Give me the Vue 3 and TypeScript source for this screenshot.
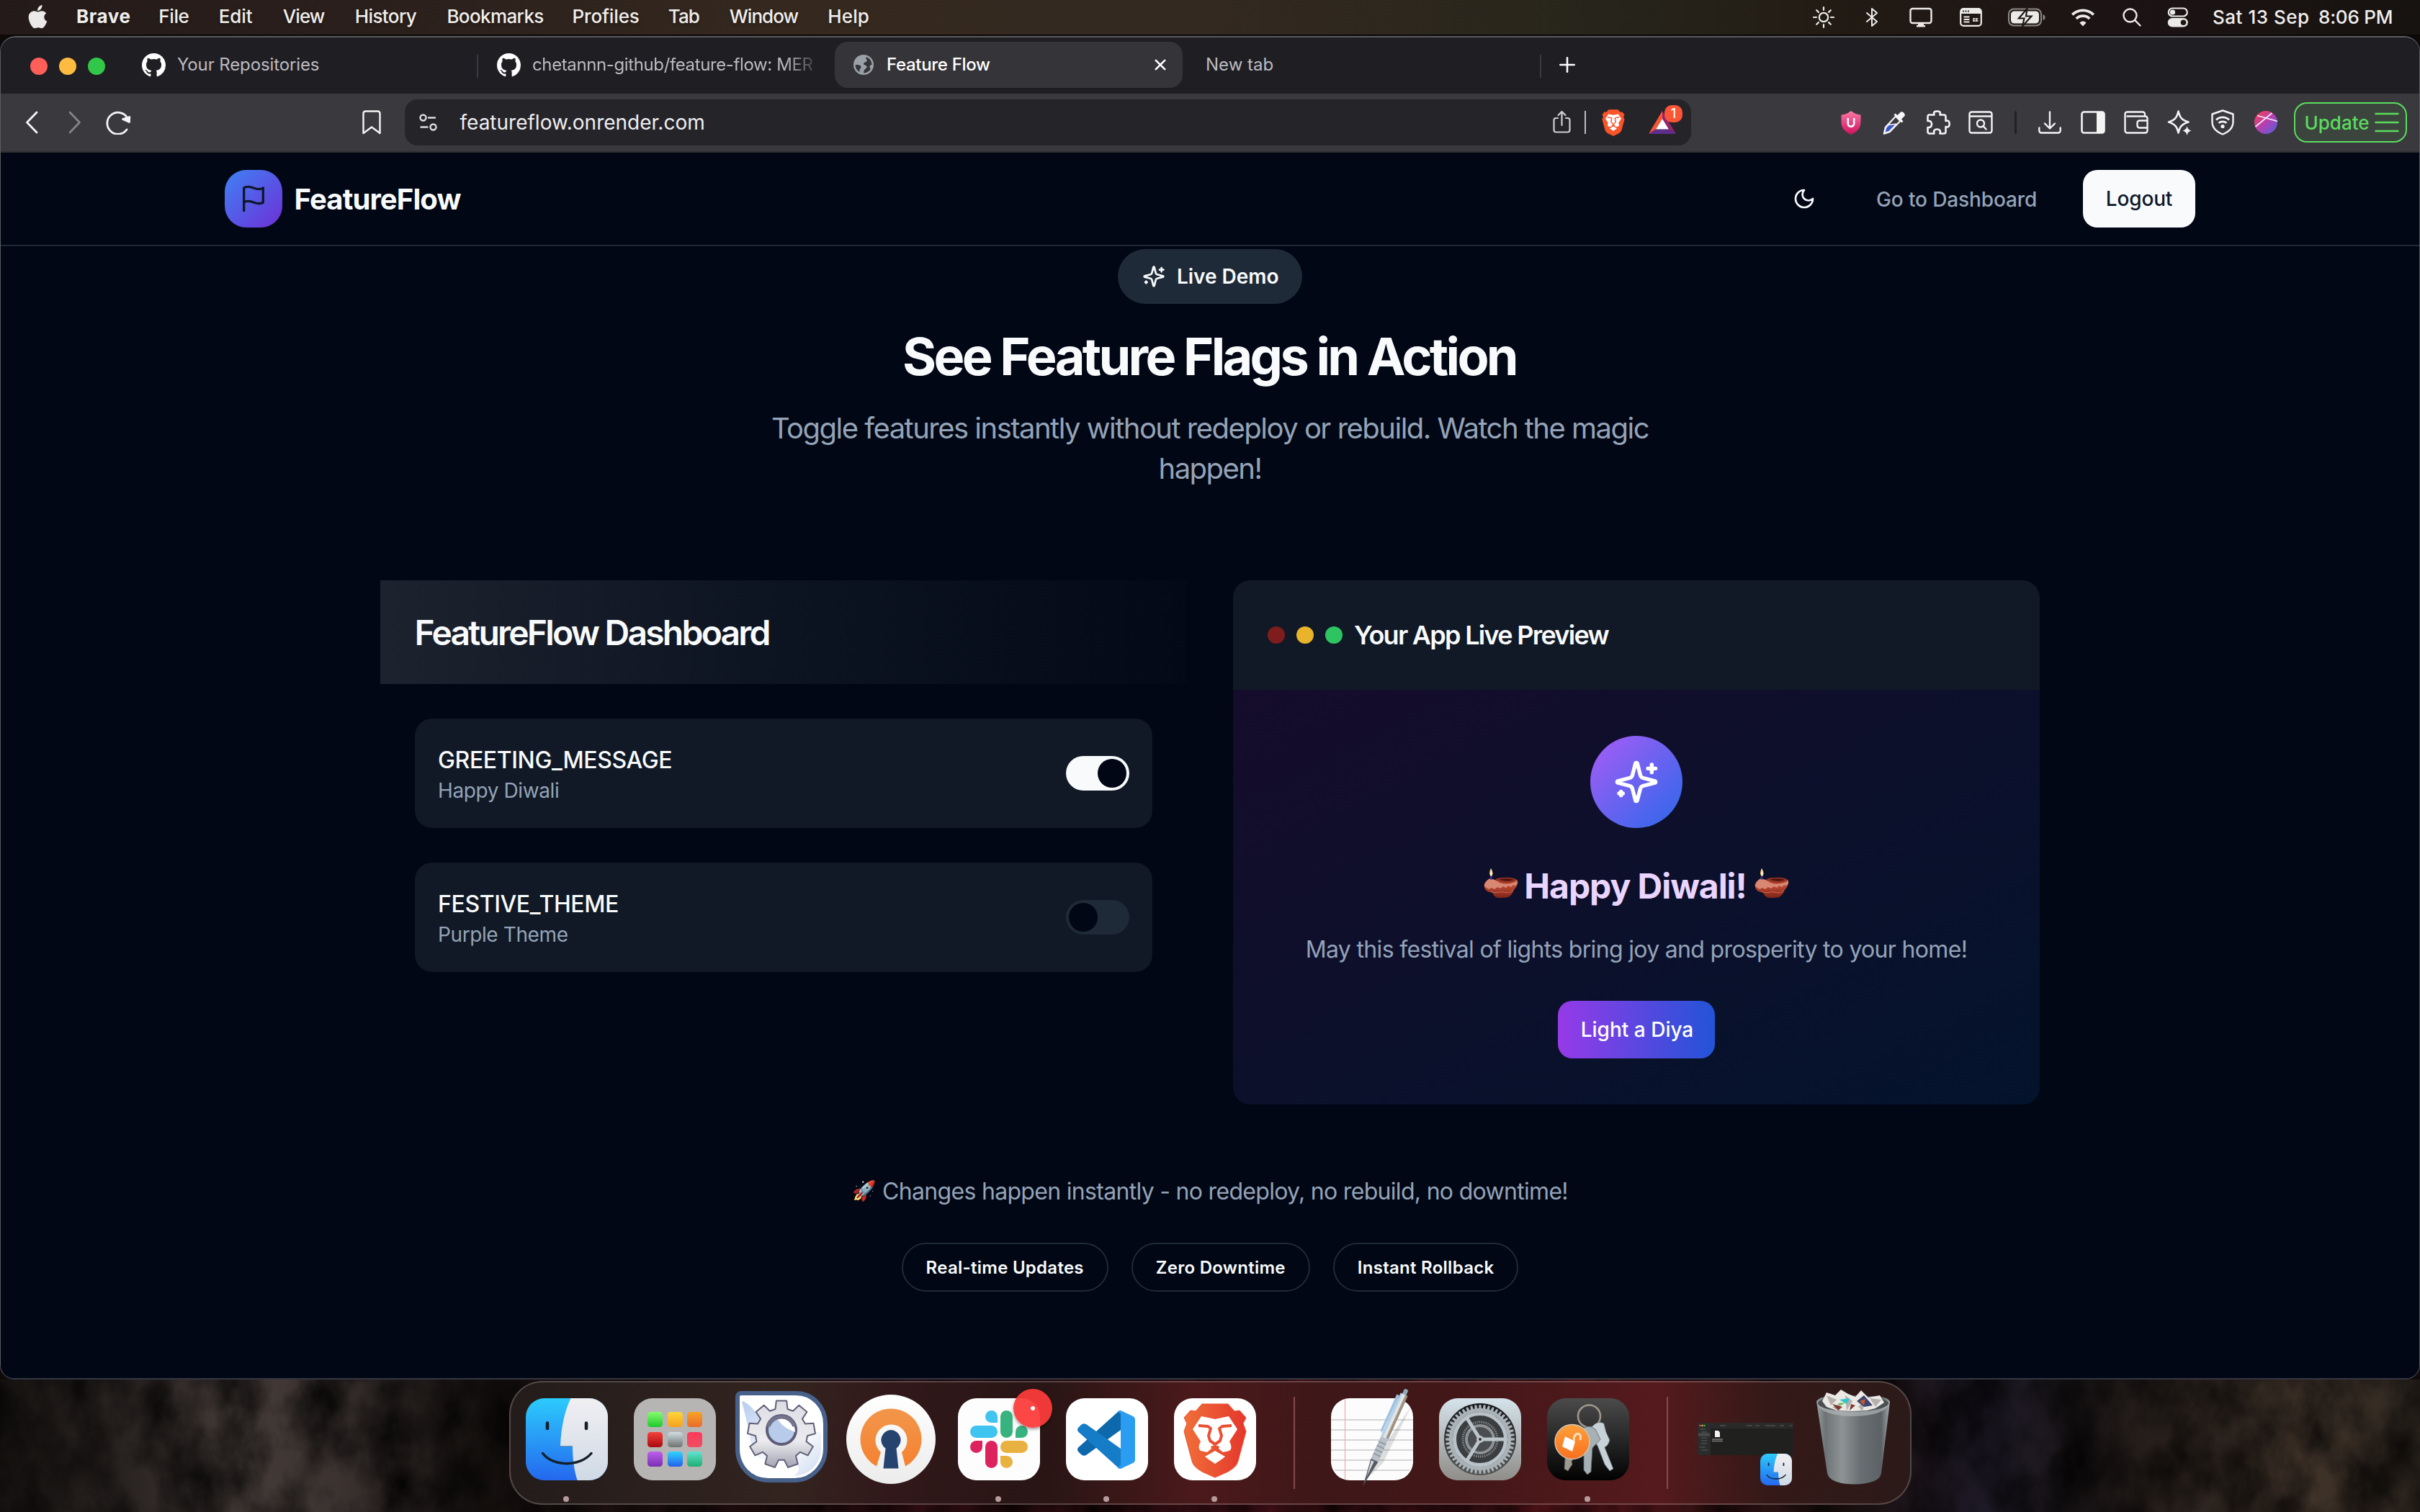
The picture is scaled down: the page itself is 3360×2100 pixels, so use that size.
<script setup lang="ts">
interface MenuItem { label: string; width: number; spacing: number; bold?: boolean }

const menu: MenuItem[] = [
  { label: 'Brave', width: 114.2, spacing: 0.57, bold: true },
  { label: 'File', width: 83.6, spacing: -0.34 },
  { label: 'Edit', width: 89, spacing: -0.1 },
  { label: 'View', width: 100, spacing: -0.94 },
  { label: 'History', width: 127.6, spacing: -0.61 },
  { label: 'Bookmarks', width: 174, spacing: -0.61 },
  { label: 'Profiles', width: 133.4, spacing: -0.11 },
  { label: 'Tab', width: 85, spacing: -0.92 },
  { label: 'Window', width: 136.6, spacing: -0.98 },
  { label: 'Help', width: 60, spacing: 0.11 },
]

const flags = [
  { key: 'GREETING_MESSAGE', note: 'Happy Diwali', on: true },
  { key: 'FESTIVE_THEME', note: 'Purple Theme', on: false },
]

const pills = ['Real-time Updates', 'Zero Downtime', 'Instant Rollback']

const launchTiles = [
  ['#86fb72', '#1fc92b'], ['#fdd63c', '#f7a01d'], ['#f7a326', '#ea6a2c'],
  ['#f5413b', '#a90a10'], ['#cfdde2', '#6f7271'], ['#fb3a5c', '#ef4e62'],
  ['#bb60ea', '#7a2fb4'], ['#2fd5fd', '#2360ea'], ['#62e2cf', '#1fae72'],
]

/* Outline of a cog with the given number of teeth around (cx, cy). */
function cog(cx: number, cy: number, teeth: number, outer: number, inner: number): string {
  const pts: string[] = []
  const step = (Math.PI * 2) / teeth
  for (let i = 0; i < teeth; i++) {
    const a = i * step - Math.PI / 2
    const ring: [number, number][] = [[-0.34, inner], [-0.22, outer], [0.22, outer], [0.34, inner]]
    for (const [k, r] of ring) {
      pts.push(`${(cx + Math.cos(a + k * step) * r).toFixed(2)} ${(cy + Math.sin(a + k * step) * r).toFixed(2)}`)
    }
  }
  return `M${pts.join('L')}Z`
}
const prefsCog = cog(64, 60, 9, 47, 36)
const settingsCog = cog(57, 57, 48, 48, 43)
</script>

<template>
  <div class="desktop">
    <svg class="defs" width="0" height="0" aria-hidden="true">
      <defs>
        <linearGradient id="finderBlue" x1="0" y1="0" x2="0" y2="1"><stop offset="0" stop-color="#2ccbfd" /><stop offset="1" stop-color="#2468ee" /></linearGradient>
        <linearGradient id="finderFace" x1="0" y1="0" x2="0" y2="1"><stop offset="0" stop-color="#f0eff2" /><stop offset="1" stop-color="#cfdae6" /></linearGradient>
        <linearGradient id="braveFill" x1="0" y1="0" x2="1" y2="0"><stop offset="0" stop-color="#f06f38" /><stop offset="1" stop-color="#e5372c" /></linearGradient>
        <clipPath id="tileClip"><rect width="114" height="114" rx="26" /></clipPath>
        <symbol id="finder" viewBox="0 0 114 114">
          <g clip-path="url(#tileClip)">
            <rect width="114" height="114" fill="url(#finderBlue)" />
            <path d="M62.500 0C54 18 49 40 48 66.500H65C65 84 67 100 71.500 114H114V0Z" fill="url(#finderFace)" />
            <path d="M48 66.500H65" stroke="#8090a0" stroke-width="1.200" />
          </g>
          <g fill="none" stroke="#14202c" stroke-linecap="round">
            <path d="M30 34.500V42M84 34.500V42" stroke-width="4.600" />
            <path d="M23.500 76.500C38 95.500 75 95.500 91 76.500" stroke-width="3.400" />
          </g>
        </symbol>
        <symbol id="sparkles" viewBox="0 0 24 24">
          <path d="M9.937 15.500A2 2 0 0 0 8.500 14.063l-6.135-1.582a.5.5 0 0 1 0-.962L8.500 9.936A2 2 0 0 0 9.937 8.500l1.582-6.135a.5.5 0 0 1 .963 0L14.063 8.500A2 2 0 0 0 15.500 9.937l6.135 1.581a.5.5 0 0 1 0 .964L15.500 14.063a2 2 0 0 0-1.437 1.437l-1.582 6.135a.5.5 0 0 1-.963 0z" />
          <path d="M20 3v4M22 5h-4M4 17v2M5 18H3" />
        </symbol>
        <symbol id="github" viewBox="0 0 16 16">
          <path fill="#fff" d="M8 0C3.580 0 0 3.580 0 8c0 3.540 2.290 6.530 5.470 7.590.4.070.55-.17.55-.38 0-.19-.01-.82-.01-1.490-2.010.37-2.530-.49-2.690-.94-.09-.23-.48-.94-.82-1.130-.28-.15-.68-.52-.01-.53.63-.01 1.080.58 1.230.82.72 1.210 1.870.87 2.330.66.070-.52.28-.87.51-1.070-1.780-.2-3.640-.89-3.640-3.950 0-.87.31-1.590.82-2.150-.08-.2-.36-1.020.08-2.120 0 0 .67-.21 2.200.82.64-.18 1.320-.27 2-.27s1.360.09 2 .27c1.530-1.040 2.200-.82 2.200-.82.44 1.100.16 1.920.08 2.120.51.56.82 1.270.82 2.150 0 3.070-1.870 3.750-3.650 3.950.29.25.54.73.54 1.480 0 1.070-.01 1.930-.01 2.200 0 .21.15.46.55.38A8.010 8.010 0 0 0 16 8c0-4.420-3.580-8-8-8" />
        </symbol>
        <symbol id="lion" viewBox="0 0 88 104">
          <path class="lion-mane" d="M26 1H62L71 11L78 10L87 20L83 28L87 39L76 80C74 88 68 91 62 95L44 103L26 95C20 91 14 88 12 80L1 39L5 28L1 20L10 10L17 11Z" />
          <path fill="#fff" stroke="none" d="M25 18L44 22L63 18L75 36L64 53Q69 62 64 66L55 68L49 63L50 60L44 58L38 60L39 63L33 68L24 66Q19 62 24 53L13 36Z" />
          <path fill="#fff" stroke="none" d="M44 66L58 74L53 78L44 84L35 78L30 74Z" />
          <path d="M21 31L34 32L38 35L35 45L37 52L44 57L51 52L53 45L50 35L54 32L67 31" fill="none" stroke-width="4" stroke-linejoin="round" />
        </symbol>
        <linearGradient id="clay" x1="0" y1="0" x2="0" y2="1"><stop offset="0" stop-color="#d8755c" /><stop offset=".45" stop-color="#b44630" /><stop offset="1" stop-color="#7c2318" /></linearGradient>
        <symbol id="diya" viewBox="0 0 48 42">
          <path d="M1 26C-1 21 4 17 9 14L22 18L46 16C49 19 46 26 42 30C38 41 32 41 25 41C17 42 15 39 12 34C6 33 2 31 1 26Z" fill="url(#clay)" />
          <path d="M1 25C2 19 5 16 9 14C13 15 17 17 21 20C28 23 39 22 47 18C47 21 46 23 44 24L41 23L38 26L34 24L31 27L27 25L23 28L19 26L15 29L11 27L7 29L4 27Z" fill="#d88772" />
          <path d="M16 15C24 12 42 12 46 16C43 21 28 22 22 19Z" fill="#9c3521" />
          <path d="M21 15.500C28 13.500 38 14 42 16C36 18.500 27 18 21 15.500Z" fill="#4a1510" />
          <path d="M10 32Q14 35 19 33.500Q26 31.500 32 34Q37 35 41 30" fill="none" stroke="#c8654d" stroke-width="1" />
          <path d="M8.500 15L9 9L11.500 9.500L11.500 16Z" fill="#35317e" />
          <path d="M10 0C13 5 13.500 9 10.500 11C7.500 10 7.500 5 10 0Z" fill="#ffd98a" />
          <path d="M10.200 4C11.500 7 11.500 9 10.300 10C9 9 9 7 10.200 4Z" fill="#fffbe8" />
        </symbol>
      </defs>
    </svg>

    <header class="menubar">
      <svg class="apple" width="27" height="33" viewBox="0 0 27 33" fill="#eceae8">
        <path d="M19.500 0C19.700 2.300 18.800 4.300 17.500 5.800C16.200 7.300 14.600 8 13 7.900C12.800 5.800 13.800 3.800 15 2.400C16.200 1 17.900 .2 19.500 0ZM25.300 11.600C23.200 12.900 22.300 14.600 22.300 16.800C22.300 19.600 23.900 21.700 26.300 22.600C25.600 24.900 24.600 27 23.200 29C21.900 30.900 20.800 32.300 18.900 32.300C17.100 32.300 16.400 31.300 14.200 31.300C12 31.300 11.200 32.300 9.500 32.300C7.600 32.400 6.400 31 5 29C.8 23 -1 14.500 2.700 10.900C4.400 9.100 6.400 8.200 8.400 8.200C10.500 8.200 12 9.400 13.800 9.400C15.500 9.400 16.800 8.200 19.200 8.200C21.500 8.200 23.800 9.400 25.300 11.600Z" />
      </svg>
      <nav class="menu">
        <span v-for="m in menu" :key="m.label" :class="{ bold: m.bold }" :style="{ width: m.width + 'px', letterSpacing: m.spacing + 'px' }">{{ m.label }}</span>
      </nav>
      <div class="status">
        <svg width="32" height="32" viewBox="0 0 32 32" fill="none" stroke="#eceae8" stroke-width="2.200" stroke-linecap="round"><circle cx="16" cy="16" r="6.200" /><path d="M16 2v4M16 26v4M2 16h4M26 16h4M6.200 6.200l2.700 2.700M23.100 23.100l2.700 2.700M6.200 25.800l2.700-2.700M23.100 8.900l2.700-2.700" /></svg>
        <svg width="18" height="28" viewBox="0 0 18 28" fill="none" stroke="#eceae8" stroke-width="2" stroke-linejoin="round" stroke-linecap="round"><path d="M2 8l14 12-7 6V2l7 6L2 20" /></svg>
        <svg width="32" height="28" viewBox="0 0 32 28"><rect x="1.500" y="2" width="29" height="20" rx="3" fill="none" stroke="#eceae8" stroke-width="2.400" /><path d="M12 22h8v3h2v2.500H10V25h2z" fill="#eceae8" /></svg>
        <svg width="31" height="26" viewBox="0 0 31 26"><rect x="1.200" y="1.200" width="28.600" height="23.600" rx="4" fill="none" stroke="#eceae8" stroke-width="2.200" /><path d="M1.500 2h28v6h-28z" fill="#eceae8" /><g fill="#1d1714"><circle cx="5" cy="4.600" r="1.100" /><circle cx="8.500" cy="4.600" r="1.100" /><circle cx="12" cy="4.600" r="1.100" /></g><path d="M5.500 12.500h8M5.500 16h8M5.500 19.500h8" stroke="#eceae8" stroke-width="1.800" /><path d="M19.500 14v5M23.500 14v5M18 15.200h7.500M18 18h7.500" stroke="#eceae8" stroke-width="1.300" /></svg>
        <svg width="52" height="26" viewBox="0 0 52 26"><rect x="1" y="1.500" width="45" height="23" rx="7" fill="none" stroke="#8d8985" stroke-width="2" /><rect x="4" y="4.500" width="39" height="17" rx="4.500" fill="#eceae8" /><path d="M48.500 9q3 1 3 4t-3 4z" fill="#8d8985" /><path d="M26.500 1L15 14.500h7.500L20 25.500L32.500 11.500H25Z" fill="#eceae8" stroke="#1d1714" stroke-width="2.200" /></svg>
        <svg width="34" height="26" viewBox="0 0 34 26" fill="none" stroke="#eceae8" stroke-width="3.800"><path d="M2.200 9.400a21 21 0 0 1 29.600 0" /><path d="M7.800 15a13 13 0 0 1 18.400 0" /><path d="M17 25.500l-4.600-5a6.500 6.500 0 0 1 9.200 0z" fill="#eceae8" stroke="none" /></svg>
        <svg width="26" height="26" viewBox="0 0 26 26" fill="none" stroke="#eceae8" stroke-width="2.400" stroke-linecap="round"><circle cx="10.500" cy="10.500" r="9" /><path d="M17.200 17.200l7.300 7.300" /></svg>
        <svg width="30" height="28" viewBox="0 0 30 28"><rect x="1.800" y="1.500" width="26" height="11" rx="5.500" fill="none" stroke="#eceae8" stroke-width="2.200" /><circle cx="7.500" cy="7" r="3.600" fill="#eceae8" /><rect x=".8" y="15" width="28" height="12.500" rx="6.200" fill="#eceae8" /><circle cx="22.500" cy="21.200" r="3.800" fill="#1d1714" /></svg>
        <div class="clock"><span class="date">Sat 13 Sep</span><span class="time">8:06 PM</span></div>
      </div>
    </header>

    <main class="window">
      <div class="tabstrip">
        <div class="lights"><i class="close" /><i class="mini" /><i class="zoom" /></div>
        <div class="tab first"><svg width="33" height="33"><use href="#github" /></svg><span>Your Repositories</span></div>
        <i class="tabsep" />
        <div class="tab second"><svg width="33" height="33"><use href="#github" /></svg><span class="fade">chetannn-github/feature-flow: MER</span></div>
        <div class="tab active">
          <svg width="28" height="28" viewBox="0 0 28 28"><circle cx="14" cy="14" r="14" fill="#9aa0a8" /><path d="M18 3.300C16 6 19.500 6.500 18.500 9C17.500 11 14.500 10 14 12.500C13.500 14.500 18 14 18.500 16.500C19 19 15.500 19.500 14.500 22C14 23.500 14.500 25 14 25.500C18.500 25.500 22 23 24 19.500C21.500 18 22 14.500 25.500 14C25.500 9 22.500 5 18 3.300Z" fill="#353439" /><path d="M2.600 14C7 13.500 11 14.500 10.500 17.500C10 19.500 8 19.500 8.500 22C9 23.500 8.500 24 8.500 24A11.500 11.500 0 0 1 2.600 14Z" fill="#353439" /></svg>
          <span>Feature Flow</span>
          <svg class="x" width="16" height="16" viewBox="0 0 16 16" stroke="#fff" stroke-width="2.600" stroke-linecap="round"><path d="M1.800 1.800l12.400 12.400M14.200 1.800L1.800 14.200" /></svg>
        </div>
        <div class="tab last"><span>New tab</span></div>
        <i class="tabsep" />
        <svg class="plus" width="22" height="22" viewBox="0 0 22 22" stroke="#fff" stroke-width="2.600" stroke-linecap="round"><path d="M11 1.300v19.400M1.300 11h19.400" /></svg>
      </div>

      <div class="toolbar">
        <div class="history">
          <svg width="18" height="32" viewBox="0 0 18 32" fill="none" stroke="#f4f4f5" stroke-width="2.800" stroke-linecap="round" stroke-linejoin="round"><path d="M16 2L2.500 16L16 30" /></svg>
          <svg width="18" height="32" viewBox="0 0 18 32" fill="none" stroke="#86858a" stroke-width="2.600" stroke-linecap="round" stroke-linejoin="round"><path d="M2 2L15.500 16L2 30" /></svg>
          <svg width="36" height="34" viewBox="0 0 36 34" fill="none" stroke="#f4f4f5" stroke-width="2.800" stroke-linecap="round"><path d="M30 27A15 15 0 1 1 31 11" /><path d="M24.500 12.500L33.800 9.500L33.500 16.500Z" fill="#f4f4f5" stroke-linejoin="round" /></svg>
        </div>
        <svg class="bookmark" width="26" height="34" viewBox="0 0 26 34" fill="none" stroke="#f4f4f5" stroke-width="2.400" stroke-linejoin="round"><path d="M1.500 4.500a3 3 0 0 1 3-3h17a3 3 0 0 1 3 3V32L13 23.500L1.500 32Z" /></svg>
        <div class="address">
          <svg class="tune" width="25" height="24" viewBox="0 0 25 24" fill="none" stroke="#dcdce0" stroke-width="2.400" stroke-linecap="round"><circle cx="5.500" cy="5.500" r="4" /><path d="M13 5.500h9M2.500 18.500h9" /><circle cx="19.500" cy="18.500" r="4" /></svg>
          <span class="url">featureflow.onrender.com</span>
          <svg class="share" width="25" height="32" viewBox="0 0 25 32" fill="none" stroke="#cfced4" stroke-width="2.200" stroke-linecap="round" stroke-linejoin="round"><path d="M12.500 21V2M7.500 7l5-5 5 5M7 11H4.500a3 3 0 0 0-3 3v13.500a3 3 0 0 0 3 3h16a3 3 0 0 0 3-3V14a3 3 0 0 0-3-3H18" /></svg>
          <i class="urlsep" />
          <svg class="lion" width="32" height="37"><use href="#lion" /></svg>
          <div class="bat">
            <svg width="38" height="32" viewBox="0 0 38 32"><path d="M19 0L0 32L10 25.500L19 11Z" fill="#fb5534" /><path d="M19 0L38 32L28 25.500L19 11Z" fill="#96226b" /><path d="M0 32H38L28 25.500H10Z" fill="#5f2e8c" /><path d="M19 11L10 25.500H28Z" fill="#fff" /></svg>
            <b>1</b>
          </div>
        </div>
        <div class="tools">
          <svg width="28" height="33" viewBox="0 0 28 33"><defs><linearGradient id="ub" x1="0" y1="0" x2="0" y2="1"><stop offset="0" stop-color="#fb7aa4" /><stop offset="1" stop-color="#cf1160" /></linearGradient></defs><path d="M14 0C18 3.500 23 5 27.500 5.500V16C27.500 24 22 29.500 14 33C6 29.500 .5 24 .5 16V5.500C5 5 10 3.500 14 0Z" fill="url(#ub)" /><path d="M9.800 10v7.500a4.200 4.200 0 0 0 8.400 0V10" fill="none" stroke="#fff" stroke-width="2.600" /></svg>
          <svg width="32" height="33" viewBox="0 0 32 33"><path d="M4 23L18 8L24 14L9.500 29L2 31.500Z" fill="#3457c5" stroke="#f1f1f3" stroke-width="2.600" stroke-linejoin="round" /><path d="M7.500 19.500L18 8L24 14L20 18Z" fill="#3a393e" stroke="#f1f1f3" stroke-width="1.600" /><path d="M15.500 5.500L26.500 16.500L28.500 14.500L26 11.500L30.500 7C32 4.500 28 0 25 1.500L20.500 6L17.500 3.500Z" fill="#f7f7f8" /></svg>
          <svg class="puzzle" width="34" height="34" viewBox="0 0 34 34" fill="none" stroke="#f4f4f5" stroke-width="2.600" stroke-linejoin="round"><path d="M4 6.500H11.500C10 2.500 12.500 1.500 15.500 1.500C18.500 1.500 21 2.500 19.500 6.500H25a2.500 2.500 0 0 1 2.500 2.500V15C31 13.500 32.700 16 32.700 19C32.700 22 31 24.500 27.500 23V30a2.500 2.500 0 0 1-2.500 2.500H19.500C21 28 18.500 26.500 15.500 26.500C12.500 26.500 10 28 11.500 32.500H5a2.500 2.500 0 0 1-2.500-2.500V24C6.500 24.500 8 22.500 8 19.500C8 16.500 6.500 14.500 2.500 15V9A2.500 2.500 0 0 1 4 6.500Z" /></svg>
          <svg width="34" height="32" viewBox="0 0 34 32" fill="none" stroke="#f4f4f5" stroke-width="2.400"><rect x="1.500" y="1.500" width="31" height="29" rx="3" /><path d="M1.500 7.500h31" /><circle cx="17" cy="17.500" r="5" /><path d="M20.500 21l4 4.500" stroke-linecap="round" /></svg>
          <i class="toolsep" />
          <svg width="32" height="32" viewBox="0 0 32 32" fill="none" stroke="#f4f4f5" stroke-width="2.400" stroke-linecap="round" stroke-linejoin="round"><path d="M16 1.500V24M9 17.500L16 24.500L23 17.500M1.300 23.500V27.500a3 3 0 0 0 3 3h23.400a3 3 0 0 0 3-3V23.500" /></svg>
          <svg width="34" height="32" viewBox="0 0 34 32"><rect x="1.500" y="1.500" width="31" height="29" rx="3" fill="none" stroke="#f4f4f5" stroke-width="2.600" /><path d="M22 1.500h9a1.500 1.500 0 0 1 1.500 1.500v26a1.500 1.500 0 0 1-1.500 1.500h-9z" fill="#f4f4f5" /></svg>
          <svg width="34" height="32" viewBox="0 0 34 32" fill="none" stroke="#f4f4f5" stroke-width="2.400" stroke-linejoin="round"><path d="M3.500 7.500H29.500a3 3 0 0 1 3 3V27.500a3 3 0 0 1-3 3H4.500a3 3 0 0 1-3-3V4.500a3 3 0 0 1 3-3H26a3 3 0 0 1 3 3V7M32.500 13.500H21.500a3 3 0 0 0-3 3v4a3 3 0 0 0 3 3h11" /></svg>
          <svg width="34" height="36" viewBox="0 0 34 36"><path d="M15.500 2.500C17.500 11 20 14.500 29.500 17.500C20 20.500 17.500 24 15.500 32.500C13.500 24 11 20.500 2 17.500C11 14.500 13.500 11 15.500 2.500Z" fill="none" stroke="#f4f4f5" stroke-width="2.600" stroke-linejoin="round" /><path d="M27.500 23C28.500 27 29.500 28 33.500 29.500C29.500 31 28.500 32 27.500 36C26.500 32 25.500 31 21.500 29.500C25.500 28 26.500 27 27.500 23Z" fill="#f4f4f5" /></svg>
          <svg width="32" height="36" viewBox="0 0 32 36" fill="none" stroke="#f4f4f5" stroke-width="2.400"><path d="M16 1.500L30.500 6.500V17C30.500 25.500 25 31 16 34.500C7 31 1.500 25.500 1.500 17V6.500Z" stroke-linejoin="round" /><path d="M7 14.500a13 13 0 0 1 18 0M10.500 18.800a8.500 8.500 0 0 1 11 0" stroke-width="2.800" /><circle cx="16" cy="23.500" r="2.600" fill="#f4f4f5" stroke="none" /></svg>
          <svg width="32" height="32" viewBox="0 0 32 32"><defs><linearGradient id="av" x1="0" y1="0" x2="1" y2="1"><stop offset=".1" stop-color="#f0405e" /><stop offset=".5" stop-color="#b63fb2" /><stop offset="1" stop-color="#4a63e0" /></linearGradient></defs><circle cx="16" cy="16" r="16" fill="url(#av)" /><path d="M4 6.500L32 14.500M1.500 22L24.500 3" stroke="#f3e4f5" stroke-width="1.800" /></svg>
        </div>
        <button class="update">Update<svg width="34" height="28" viewBox="0 0 34 28" stroke="#5bdc5e" stroke-width="2.600" stroke-linecap="round"><path d="M1.500 2h31M1.500 14h31M1.500 26h31" /></svg></button>
      </div>

      <section class="page">
        <div class="nav">
          <div class="logo"><svg width="40" height="40" viewBox="0 0 24 24" fill="none" stroke="#0f172a" stroke-width="2" stroke-linecap="round" stroke-linejoin="round"><path d="M4 15s1-1 4-1 5 2 8 2 4-1 4-1V3s-1 1-4 1-5-2-8-2-4 1-4 1zM4 22v-7" /></svg></div>
          <span class="brand">FeatureFlow</span>
          <button class="moon"><svg width="32" height="32" viewBox="0 0 24 24" fill="none" stroke="#f8fafc" stroke-width="2" stroke-linecap="round" stroke-linejoin="round"><path d="M12 3a6 6 0 0 0 9 9 9 9 0 1 1-9-9Z" /></svg></button>
          <a class="golink">Go to Dashboard</a>
          <button class="logout">Logout</button>
        </div>

        <div class="hero">
          <div class="badge"><svg class="lucide" width="32" height="32"><use href="#sparkles" /></svg>Live Demo</div>
          <h1>See Feature Flags in Action</h1>
          <p>Toggle features instantly without redeploy or rebuild. Watch the magic<br>happen!</p>
        </div>

        <div class="demo">
          <div class="dash">
            <div class="dashhead">FeatureFlow Dashboard</div>
            <div class="flags">
              <div v-for="f in flags" :key="f.key" class="flag">
                <div class="flagtext"><span class="key">{{ f.key }}</span><span class="note">{{ f.note }}</span></div>
                <div class="switch" :class="{ on: f.on }"><i /></div>
              </div>
            </div>
          </div>
          <div class="preview">
            <div class="prevhead"><i class="r" /><i class="y" /><i class="g" /><span>Your App Live Preview</span></div>
            <div class="prevbody">
              <div class="orb"><svg class="lucide" width="64" height="64"><use href="#sparkles" /></svg></div>
              <div class="greet"><svg width="48" height="42"><use href="#diya" /></svg><span>Happy Diwali!</span><svg width="48" height="42"><use href="#diya" /></svg></div>
              <p>May this festival of lights bring joy and prosperity to your home!</p>
              <button>Light a Diya</button>
            </div>
          </div>
        </div>

        <div class="changes"><span class="rocket">🚀</span><span>Changes happen instantly - no redeploy, no rebuild, no downtime!</span></div>
        <div class="pills"><span v-for="p in pills" :key="p">{{ p }}</span></div>
      </section>
    </main>

    <footer class="shelf">
      <svg class="grain" width="3360" height="184">
        <filter id="fur" x="0" y="0" width="100%" height="100%"><feTurbulence type="fractalNoise" baseFrequency=".014 .010" numOctaves="6" seed="21" /><feColorMatrix values="0 0 0 0 0  0 0 0 0 0  0 0 0 0 0  1.500 0 0 0 -.42" /></filter>
        <rect width="3360" height="184" filter="url(#fur)" />
      </svg>
      <div class="dock">
        <div class="slot running"><svg width="114" height="114"><use href="#finder" /></svg></div>
        <div class="slot">
          <div class="launch"><i v-for="(t, i) in launchTiles" :key="i" :style="{ background: `linear-gradient(${t[0]}, ${t[1]})` }" /></div>
        </div>
        <div class="slot">
          <svg width="128" height="128" viewBox="0 0 128 128" class="prefs">
            <defs>
              <linearGradient id="pg" x1="0" y1="0" x2="1" y2="1"><stop offset="0" stop-color="#a9c2ea" /><stop offset=".6" stop-color="#fff" /><stop offset="1" stop-color="#c3d3ee" /></linearGradient>
              <linearGradient id="gg" x1="0" y1="0" x2="0" y2="1"><stop offset="0" stop-color="#dcdce4" /><stop offset=".6" stop-color="#ececef" /><stop offset="1" stop-color="#a2a2b2" /></linearGradient>
            </defs>
            <path d="M3 8a5 5 0 0 1 5-5H84C108 3 125 22 125 46V80C125 104 106 124 82 124H46C20 124 3 104 3 80Z" fill="#fff" stroke="#47618a" stroke-width="6" />
            <path d="M9 14Q20 16 36 40Q60 60 119 57V82C118 102 102 117 82 118Q100 100 64 100Q22 104 20 60Z" fill="url(#pg)" opacity=".85" />
            <path :d="prefsCog" fill="url(#gg)" stroke="#62617a" stroke-width="2" stroke-linejoin="round" />
            <circle cx="64" cy="54" r="20" fill="#b9cbea" stroke="#5e5d78" stroke-width="4" />
            <path d="M64 46Q70 52 83 57A20 20 0 0 0 57 37Z" fill="#fff" />
            <path d="M46 49A19 19 0 0 1 82 49" fill="none" stroke="#74738c" stroke-width="5" />
          </svg>
        </div>
        <div class="slot">
          <svg width="124" height="124" viewBox="0 0 124 124">
            <defs><linearGradient id="ov" x1="0" y1="0" x2="0" y2="1"><stop offset="0" stop-color="#fff" /><stop offset="1" stop-color="#ececec" /></linearGradient><linearGradient id="oo" x1="0" y1="0" x2="0" y2="1"><stop offset="0" stop-color="#f2964a" /><stop offset="1" stop-color="#f58231" /></linearGradient></defs>
            <circle cx="62" cy="62" r="62" fill="url(#ov)" />
            <path d="M42 99.500A42.500 42.500 0 1 1 82 99.500L77 80A22 22 0 1 0 48 80Z" fill="url(#oo)" />
            <path d="M62 49a14 14 0 0 1 7.500 25.500L72.500 102.500H51.500L54.500 74.500A14 14 0 0 1 62 49Z" fill="#26426e" />
          </svg>
        </div>
        <div class="slot running">
          <svg width="114" height="114" viewBox="0 0 114 114">
            <rect width="114" height="114" rx="26" fill="#fdfdfd" />
            <g fill="#40c4f0"><path d="M46.500 17a8.500 8.500 0 0 1 8.500 8.500V34H46.500a8.500 8.500 0 0 1 0-17Z" /><rect x="17" y="38" width="38" height="17" rx="8.500" /></g>
            <g fill="#38b37f"><rect x="59" y="17" width="17" height="38" rx="8.500" /><path d="M88.500 38a8.500 8.500 0 0 1 0 17H80V46.500a8.500 8.500 0 0 1 8.500-8.500Z" /></g>
            <g fill="#dd225d"><path d="M34 59V67.500A8.500 8.500 0 1 1 25.500 59Z" /><rect x="38" y="59" width="17" height="38" rx="8.500" /></g>
            <g fill="#e9b13f"><rect x="59" y="59" width="38" height="17" rx="8.500" /><path d="M59 80h8.500A8.500 8.500 0 1 1 59 88.500Z" /></g>
          </svg>
          <i class="alert" />
        </div>
        <div class="slot running">
          <svg width="114" height="114" viewBox="0 0 114 114">
            <rect width="114" height="114" rx="26" fill="#fff" />
            <path d="M76 17V44L28 79Q24 81 21 78L17 74Q15 71 17 68.500L72 19Q74 17 76 17Z" fill="#0d68ac" />
            <path d="M76 98V70L28 36Q24 34 21 37L17 41Q15 44 17 46.500L72 96Q74 98 76 98Z" fill="#157dc8" />
            <path d="M76 17L93 25Q96 26.500 96 30V85Q96 88.500 93 90L76 98Q72 98 71 95Q76 96 76 91V24Q76 19 71 20Q72 17 76 17Z" fill="#2a9df1" />
          </svg>
        </div>
        <div class="slot running">
          <svg width="114" height="114" viewBox="0 0 114 114" class="bravetile"><rect width="114" height="114" rx="26" fill="#fff" /><use href="#lion" x="13" y="7" width="88" height="104" /></svg>
        </div>
        <i class="dsep" />
        <div class="slot">
          <svg width="114" height="114" viewBox="0 0 114 114" class="spill">
            <defs><linearGradient id="pen" x1="0" y1="0" x2="1" y2="0"><stop offset="0" stop-color="#a7c3d8" /><stop offset=".5" stop-color="#e6eef4" /><stop offset="1" stop-color="#6f7f8e" /></linearGradient></defs>
            <rect width="114" height="114" rx="26" fill="#fcfcfc" />
            <path d="M0 30h114M0 44h114M0 58h114M0 72h114M1 86h112M5 100h104" stroke="#c9c9c9" stroke-width="1.600" />
            <path d="M19.500 2v110" stroke="#f0a9a9" stroke-width="1.200" />
            <path d="M50 112L66 78L112 10L72 90Z" fill="#000" opacity=".12" />
            <g transform="translate(74.500 55) rotate(24.300)">
              <rect x="-3" y="-74" width="6" height="10" rx="2" fill="#8fa9bb" />
              <rect x="-5.500" y="-66" width="11" height="66" fill="url(#pen)" />
              <rect x="2" y="-66" width="2" height="64" fill="#b88d58" />
              <path d="M-5.500 -62H-9.500V-8L-6.500 -4Z" fill="#9cc3e2" />
              <rect x="-5.500" y="0" width="11" height="34" fill="#b7bfc7" />
              <path d="M-5.500 8h11M-5.500 14h11M-5.500 20h11M-5.500 26h11" stroke="#8b949c" stroke-width="1.500" />
              <path d="M-5.500 34H5.500L1.500 62L0 74L-1.500 62Z" fill="#565b60" />
              <path d="M-4 36H0L-.5 60Z" fill="#d5dade" />
            </g>
          </svg>
        </div>
        <div class="slot">
          <svg width="114" height="114" viewBox="0 0 114 114">
            <defs><linearGradient id="sg" x1="0" y1="0" x2="0" y2="1"><stop offset="0" stop-color="#d5e3eb" /><stop offset="1" stop-color="#8f8d89" /></linearGradient><linearGradient id="sd" x1="0" y1="0" x2="0" y2="1"><stop offset="0" stop-color="#15181a" /><stop offset="1" stop-color="#555" /></linearGradient></defs>
            <rect width="114" height="114" rx="26" fill="url(#sg)" />
            <circle cx="57" cy="57" r="50" fill="url(#sd)" />
            <path :d="settingsCog" fill="#a9b2b7" />
            <circle cx="57" cy="57" r="38" fill="#24282a" />
            <circle cx="57" cy="57" r="35.500" fill="#3a3e40" stroke="#b8c2c8" stroke-width="5" />
            <circle cx="57" cy="57" r="24" fill="none" stroke="#84898c" stroke-width="3" stroke-dasharray="1.500 1.500" />
            <circle cx="57" cy="57" r="19" fill="#4a4e50" stroke="#8d9396" stroke-width="4" />
            <path d="M57 57H91M57 57L39 28M57 57L39 86" stroke="#bcc5ca" stroke-width="5" />
            <circle cx="57" cy="57" r="5" fill="#bcc5ca" /><circle cx="57" cy="57" r="2" fill="#333" />
          </svg>
        </div>
        <div class="slot running">
          <svg width="114" height="114" viewBox="0 0 114 114">
            <defs><linearGradient id="kb" x1="0" y1="0" x2="0" y2="1"><stop offset="0" stop-color="#4b4b4c" /><stop offset="1" stop-color="#020202" /></linearGradient><linearGradient id="ko" x1="0" y1="0" x2="0" y2="1"><stop offset="0" stop-color="#fda03a" /><stop offset="1" stop-color="#f9701f" /></linearGradient></defs>
            <rect width="114" height="114" rx="26" fill="url(#kb)" />
            <circle cx="58.500" cy="25" r="15.500" fill="none" stroke="#a0978a" stroke-width="2.600" />
            <g fill="#a7b1b5" stroke="#5d6264" stroke-width=".8">
              <path d="M62 40Q70 30 79 35L82 47L87 58Q85 66 80 68L92 98L87 101L80 92L70 66L62 56Z" fill="#c6d2d7" />
              <path d="M50 42Q58 36 67 43L74 57L63 69L61 102L56 106L51 100V68L44 56Z" />
              <path d="M30 66L36 84L34 88L35 92L32 96L29 101L24 98L26 70Z" fill="#a09a8e" />
            </g>
            <circle cx="35" cy="60.500" r="24" fill="url(#ko)" stroke="#cfc6b5" stroke-width="1.500" />
            <path d="M25 53L39 60L35 74L21 67Z" fill="#fff" />
            <path d="M37 59Q37 50 43 49Q48 50 46 58" fill="none" stroke="#ffe2c4" stroke-width="2.800" />
          </svg>
        </div>
        <i class="dsep far" />
        <div class="minwin">
          <svg width="133" height="45" viewBox="0 0 133 45">
            <rect width="133" height="45" fill="#20201f" /><rect width="133" height="8" fill="#2a2a2b" /><rect width="18" height="45" fill="#2b2c2c" /><rect x="1" y="14.500" width="16" height="4" fill="#4a4b4b" />
            <circle cx="3.500" cy="4" r="1.200" fill="#ee5a52" /><circle cx="6.500" cy="4" r="1.200" fill="#e5b43a" /><circle cx="9.500" cy="4" r="1.200" fill="#43c04a" />
            <path d="M31 4h8M68 4h8M80 4h6M94 4h14M114 4h6M128 4h3M3 9h8M5 13h8M5 21h8M5 25h8M5 29h8M3 34h8M5 38h9" stroke="#5c5c5c" stroke-width="1.200" />
            <path d="M24 11h5l2 2.500V20h-7z" fill="#f1f1f1" /><path d="M20 23h15M20 25.500h15" stroke="#777" stroke-width="1.400" />
          </svg>
          <svg class="minifinder" width="44" height="44"><use href="#finder" /></svg>
        </div>
        <svg class="trash" width="102" height="132" viewBox="0 0 102 132">
          <defs><linearGradient id="tb" x1="0" y1="0" x2="1" y2="0"><stop offset="0" stop-color="#9a9fa2" /><stop offset=".12" stop-color="#6e7376" /><stop offset=".35" stop-color="#8e9395" /><stop offset=".6" stop-color="#686e71" /><stop offset=".88" stop-color="#5b6164" /><stop offset="1" stop-color="#a3a8aa" /></linearGradient></defs>
          <path d="M0 16Q4 10 20 9H84Q100 11 102 17L90 116Q88 131 52 131.500Q18 131 15 116Z" fill="url(#tb)" />
          <ellipse cx="51" cy="19" rx="49" ry="11" fill="#4a4f52" />
          <path d="M8 16L14 4L26 8L34 0L44 6L54 10L62 1L72 11L88 8L94 18L82 26L70 29L50 30L28 29L14 24Z" fill="#ebe9e6" />
          <path d="M14 8L28 14L20 22ZM40 8L50 16L42 29ZM74 12L90 14L82 24ZM58 24L68 14L64 30ZM22 25L34 18L32 29Z" fill="#b5b0ac" />
          <path d="M32 14L46 12L42 20Z" fill="#2fc5c9" /><path d="M30 19L40 18L34 22Z" fill="#6cc04a" /><path d="M56 16L66 8L78 22L66 24Z" fill="#3c4470" /><path d="M60 16L68 13L66 22Z" fill="#c55a32" /><path d="M22 20L36 24L30 29ZM48 20L54 22L46 29Z" fill="#7c3b30" />
          <path d="M0 17Q4 30 51 31Q98 30 102 17Q98 36 51 37Q4 36 0 17Z" fill="#b5babc" opacity=".65" />
        </svg>
      </div>
    </footer>
  </div>
</template>

<style>
html, body { margin: 0; background: #000; }
</style>

<style scoped>
* { box-sizing: border-box; }
.desktop { width: 3360px; height: 2100px; overflow: hidden; display: flex; flex-direction: column; background: #0d0a09; font-family: Inter, "Liberation Sans", sans-serif; color: #f8fafc; white-space: nowrap; }
.defs { position: absolute; }
svg { display: block; flex: none; }
button { border: 0; padding: 0; margin: 0; font: inherit; background: none; color: inherit; }
i { display: block; flex: none; font-style: normal; }

.menubar { height: 50px; flex: none; display: flex; align-items: center; border-bottom: 2px solid #0b0807; background: linear-gradient(90deg, #241a19 0%, #2b201c 17%, #35291f 34%, #332920 50%, #27251b 66%, #221b14 76%, #1c1314 87%, #171310 100%); }
.apple { margin: -2px 0 0 39px; }
.menu { display: flex; margin-left: 40px; flex: 1; font-size: 26px; font-weight: 500; line-height: 46px; padding-bottom: 2px; color: #f0eeec; text-shadow: 0 2px 4px rgba(0, 0, 0, .35); }
.menu span { flex: none; }
.menu .bold { font-weight: 700; }
.status { flex: none; width: 860px; display: grid; grid-template-columns: 64px 69px 67px 72px 83px 73px 63px 66px 1fr; justify-items: center; align-items: center; height: 48px; }
.clock { justify-self: start; padding: 0 0 2px 15px; font-size: 26px; font-weight: 500; color: #f0eeec; display: flex; }
.date { width: 147px; letter-spacing: .51px; }
.time { letter-spacing: -.2px; }

.window { height: 1866px; flex: none; display: flex; flex-direction: column; border: 2px solid #5b5b60; border-left-width: 1px; border-right-width: 1px; border-bottom-color: #343743; border-radius: 22px 22px 20px 20px; overflow: hidden; background: #010714; }
.tabstrip { height: 78px; flex: none; background: #1f1e23; display: flex; align-items: center; font-size: 24px; color: #bcbbc0; padding-bottom: 2px; }
.lights { display: flex; gap: 16px; margin: 4px 0 0 41px; }
.lights i { width: 24px; height: 24px; border-radius: 50%; }
.close { background: #fe5f58; } .mini { background: #fdbb40; } .zoom { background: #32c748; }
.tab { display: flex; align-items: center; height: 64px; flex: none; }
.tab span { margin-top: -2px; }
.first { width: 516px; padding-left: 51px; letter-spacing: -.12px; }
.first span, .second span { margin-left: 16px; }
.tabsep { width: 2px; height: 32px; background: #3b3a40; margin-top: 4px; }
.second { width: 495px; padding-left: 26px; letter-spacing: -.38px; }
.fade { -webkit-mask-image: linear-gradient(90deg, #000 350px, transparent 402px); mask-image: linear-gradient(90deg, #000 350px, transparent 402px); }
.active { width: 483px; background: #353439; border-radius: 18px; padding: 0 23px 0 26px; color: #fff; font-weight: 500; letter-spacing: -.31px; }
.active span { margin-left: 18px; }
.x { margin-left: auto; }
.last { width: 496px; padding-left: 32px; }
.plus { margin-left: 25px; }

.toolbar { height: 82px; flex: none; background: #3a393e; border-bottom: 2px solid #302f34; display: flex; align-items: center; }
.history { display: grid; grid-template-columns: repeat(3, 60px); justify-items: center; align-items: center; margin-left: 13px; }
.bookmark { margin-left: 309px; }
.address { margin-left: 33px; width: 1786px; height: 64px; flex: none; border-radius: 18px; background: #252429; display: flex; align-items: center; }
.tune { margin-left: 20px; }
.url { margin-left: 31.500px; flex: 1; font-size: 28px; color: #eeeef0; }
.share { margin-top: -2px; }
.urlsep { width: 2px; height: 32px; background: #bdbcc2; margin-left: 19px; }
.lion { margin-left: 22px; fill: #fb542b; stroke: #fb542b; }
.bat { position: relative; margin: 0 21px 0 33px; }
.bat b { position: absolute; left: 22px; top: -8px; width: 25px; height: 24px; border-radius: 10px; background: #fb5437; color: #fff; font-size: 18px; font-weight: 500; line-height: 24px; text-align: center; }
.tools { margin-left: 192px; flex: none; display: grid; grid-template-columns: repeat(4, 60px) 36px repeat(6, 60px); justify-items: center; align-items: center; }
.puzzle { margin-left: 2px; }
.toolsep { width: 3px; height: 32px; background: #222126; border-radius: 2px; }
.update { margin-left: 8.500px; width: 157px; height: 56px; border: 2.500px solid #5bdc5e; border-radius: 18px; background: #3c443e; color: #5bdc5e; font-size: 26px; font-weight: 500; display: flex; align-items: center; padding-left: 13px; gap: 7px; }

.page { flex: 1; background: #010714; }
.nav { height: 130px; border-bottom: 2px solid #1f2a38; display: flex; align-items: center; padding: 0 311px; }
.logo { width: 80px; height: 80px; border-radius: 30px; background: linear-gradient(135deg, #3f82f5, #6d2fd6); display: flex; align-items: center; justify-content: center; }
.brand { margin: 1px 0 0 16.500px; flex: 1; font-size: 40px; font-weight: 700; letter-spacing: -.88px; }
.moon { width: 80px; display: flex; justify-content: center; }
.golink { margin-left: 28px; width: 287px; padding: 1px 0 0 32px; font-size: 28px; font-weight: 500; letter-spacing: -.12px; color: #94a3b8; }
.logout { margin-left: 32px; width: 156px; height: 80px; border-radius: 20px; background: #f8fafc; color: #0f172a; font-size: 28px; font-weight: 500; letter-spacing: -.17px; }

.lucide { fill: none; stroke: currentColor; stroke-width: 2; stroke-linecap: round; stroke-linejoin: round; }
.hero { display: flex; flex-direction: column; align-items: center; padding-top: 4px; }
.badge { width: 256px; height: 76px; border-radius: 38px; background: #1f2a38; display: flex; align-items: center; justify-content: center; gap: 15.500px; padding-left: 2px; font-size: 28px; font-weight: 600; }
h1 { margin: 33px 2px 32px 0; font-size: 72px; line-height: 80px; font-weight: 700; letter-spacing: -3.680px; }
.hero p { margin: 0; font-size: 40px; line-height: 56px; letter-spacing: -1.510px; color: #94a3b8; text-align: center; }

.demo { margin: 127px 527px 0; display: flex; gap: 64px; height: 728px; }
.dash, .preview { width: 1120px; flex: none; }
.dashhead { height: 144px; padding-left: 47.500px; line-height: 146px; font-size: 48px; font-weight: 600; letter-spacing: -2.780px; background: linear-gradient(90deg, #1c222e, #0d1421 50%, #030916); }
.flags { padding: 48px; display: flex; flex-direction: column; gap: 48px; }
.flag { height: 152px; border-radius: 24px; background: #101925; padding: 34px 32px 32px; display: flex; align-items: center; justify-content: space-between; }
.flagtext { display: flex; flex-direction: column; }
.key { font-size: 32px; line-height: 48px; font-weight: 500; letter-spacing: -.38px; }
.note { font-size: 28px; line-height: 40px; margin-top: -2px; letter-spacing: -.4px; color: #94a3b8; }
.switch { width: 88px; height: 48px; margin-top: -2px; border-radius: 24px; background: #1f2a38; padding: 4px; display: flex; }
.switch i { width: 40px; height: 40px; border-radius: 50%; background: #010714; }
.switch.on { background: #f8fafc; justify-content: flex-end; }

.preview { border-radius: 24px; overflow: hidden; display: flex; flex-direction: column; }
.prevhead { height: 152px; flex: none; background: #101925; display: flex; align-items: center; gap: 16px; padding-left: 48px; font-size: 36px; font-weight: 600; letter-spacing: -1.720px; }
.prevhead i { width: 24px; height: 24px; border-radius: 50%; }
.prevhead .r { background: #7f1d1d; } .prevhead .y { background: #eab32c; } .prevhead .g { background: #2ec462; }
.prevbody { flex: 1; background: linear-gradient(to bottom right, #150c2b, #0c102b 50%, #04132c); padding-top: 64px; display: flex; flex-direction: column; align-items: center; }
.orb { width: 128px; height: 128px; border-radius: 50%; background: linear-gradient(135deg, #a95cf6, #2b68ea); color: #fff; display: flex; align-items: center; justify-content: center; }
.greet { margin-top: 48px; height: 64px; display: flex; align-items: center; font-size: 48px; font-weight: 700; letter-spacing: -1.050px; color: #e9d5ff; }
.greet svg { margin-top: -6px; }
.greet span { margin: 0 11px 0 8px; }
.prevbody p { margin: 33px 0 47px; font-size: 32px; line-height: 48px; letter-spacing: -.67px; color: #94a3b8; }
.prevbody button { width: 218px; height: 80px; border-radius: 20px; background: linear-gradient(90deg, #963ae8, #2254d8); color: #fff; font-size: 28px; font-weight: 500; padding-left: 2px; }

.changes { margin-top: 96px; height: 48px; display: flex; justify-content: center; align-items: center; font-size: 32px; letter-spacing: -.69px; color: #94a3b8; }
.rocket { width: 42px; font-size: 27px; line-height: 32px; letter-spacing: 0; }
.pills { margin-top: 48px; display: flex; justify-content: center; gap: 32px; font-size: 24px; font-weight: 600; letter-spacing: .27px; }
.pills span { height: 68px; line-height: 65px; padding: 0 32px; border: 2px solid #1f2a38; border-radius: 34px; }

.shelf { flex: 1; position: relative; display: flex; justify-content: center; align-items: flex-start; padding: 2px 0 0 1px; background: linear-gradient(90deg, #1a1614 0, #282220 5%, #443b38 10%, #3c3331 14%, #181311 20%, #2a0c10 36%, #3c0f14 52%, #4c1216 66%, #1c100f 76%, #1d1926 82%, #1e1817 87%, #41342a 95%, #2f2720 100%); }
.grain { position: absolute; inset: 0; }
.dock { position: relative; width: 1947px; height: 172px; border-radius: 46px; border: 2px solid rgba(255, 255, 255, .2); padding: 0 0 0 3px; display: flex; background: linear-gradient(90deg, #231c1b, #33241f 20%, #32181a 27%, #281514 38%, #4b191b 49%, #3e1718 58%, #431718 68%, #551a1d 82%, #341918 90%, #2b1a18); }
.slot { position: relative; width: 150px; height: 168px; flex: none; display: flex; align-items: center; justify-content: center; padding-bottom: 10px; }
.running::after { content: ""; position: absolute; left: 70px; bottom: 2px; width: 8px; height: 8px; border-radius: 50%; background: #b59a9b; }
.launch { width: 114px; height: 114px; border-radius: 26px; background: #b7b5b4; display: grid; grid-template-columns: repeat(3, 21px); grid-auto-rows: 21px; gap: 6.500px; place-content: center; }
.launch i { border-radius: 4.500px; }
.prefs { margin: -6px 4px 0 0; }
.alert { position: absolute; left: 95px; top: 9px; width: 54px; height: 54px; border-radius: 50%; background: radial-gradient(circle, #fff 0 2.500px, transparent 3.500px), rgba(252, 60, 58, .94); box-shadow: 0 2px 4px rgba(0, 0, 0, .4); }
.bravetile { fill: url(#braveFill); stroke: #eb4f31; }
.bravetile rect { stroke: none; }
.spill { overflow: visible; }
.dsep { width: 2px; height: 128px; background: #83494c; margin: 20px 32px 0 34px; }
.dsep.far { margin: 20px 41px 0 34px; }
.minwin { position: relative; width: 133px; padding-top: 56px; flex: none; }
.minifinder { position: absolute; left: 87px; top: 99px; }
.trash { margin: 10px 0 0 32px; }
</style>
